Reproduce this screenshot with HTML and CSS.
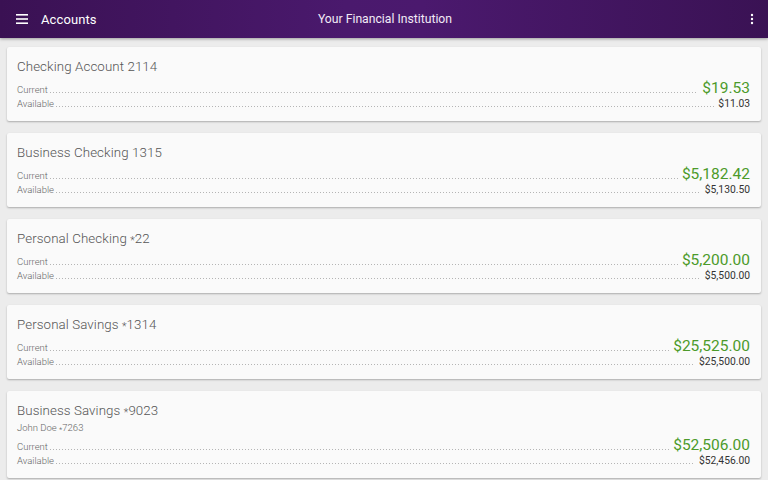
FILE: index.html
```html
<!DOCTYPE html>
<html>
<head>
<meta charset="utf-8">
<link rel="stylesheet" href="styles.css">
</head>
<body>
<header class="appbar">
  <div class="appbar-left">
    <svg class="icon-menu" width="12" height="10" viewBox="0 0 12 10"><rect x="0" y="0" width="12" height="1.6" fill="#fff"/><rect x="0" y="4.2" width="12" height="1.6" fill="#fff"/><rect x="0" y="8.4" width="12" height="1.6" fill="#fff"/></svg>
    <span class="appbar-title">Accounts</span>
  </div>
  <div class="appbar-center">Your Financial Institution</div>
  <svg class="icon-more" width="4" height="12" viewBox="0 0 4 12"><circle cx="2" cy="2" r="1.2" fill="#fff"/><circle cx="2" cy="6" r="1.2" fill="#fff"/><circle cx="2" cy="10" r="1.2" fill="#fff"/></svg>
</header>
<main class="list">
  <section class="card">
    <div class="card-title">Checking Account 2114</div>
    <div class="row row-current"><span class="label">Current</span><span class="leader"></span><span class="amount-big">$19.53</span></div>
    <div class="row row-avail"><span class="label">Available</span><span class="leader"></span><span class="amount-small">$11.03</span></div>
  </section>
  <section class="card">
    <div class="card-title">Business Checking 1315</div>
    <div class="row row-current"><span class="label">Current</span><span class="leader"></span><span class="amount-big">$5,182.42</span></div>
    <div class="row row-avail"><span class="label">Available</span><span class="leader"></span><span class="amount-small">$5,130.50</span></div>
  </section>
  <section class="card">
    <div class="card-title">Personal Checking <span class="ast">*</span>22</div>
    <div class="row row-current"><span class="label">Current</span><span class="leader"></span><span class="amount-big">$5,200.00</span></div>
    <div class="row row-avail"><span class="label">Available</span><span class="leader"></span><span class="amount-small">$5,500.00</span></div>
  </section>
  <section class="card">
    <div class="card-title">Personal Savings <span class="ast">*</span>1314</div>
    <div class="row row-current"><span class="label">Current</span><span class="leader"></span><span class="amount-big">$25,525.00</span></div>
    <div class="row row-avail"><span class="label">Available</span><span class="leader"></span><span class="amount-small">$25,500.00</span></div>
  </section>
  <section class="card">
    <div class="card-title">Business Savings <span class="ast">*</span>9023</div>
    <div class="card-sub">John Doe <span class="ast">*</span>7263</div>
    <div class="row row-current"><span class="label">Current</span><span class="leader"></span><span class="amount-big">$52,506.00</span></div>
    <div class="row row-avail"><span class="label">Available</span><span class="leader"></span><span class="amount-small">$52,456.00</span></div>
  </section>
</main>
</body>
</html>
```
FILE: styles.css
```css
html, body {
  margin: 0;
  padding: 0;
}
body {
  width: 768px;
  height: 480px;
  overflow: hidden;
  background: #ececec;
  font-family: Roboto, "Liberation Sans", sans-serif;
}
.appbar {
  position: relative;
  height: 38px;
  display: flex;
  align-items: center;
  background: linear-gradient(90deg, #3a1153 0%, #4a196d 45%, #4b196e 55%, #3a1254 100%);
  box-shadow: 0 1px 3px rgba(0,0,0,0.35);
  color: #fff;
  z-index: 2;
}
.appbar-left {
  display: flex;
  align-items: center;
  padding-left: 16px;
}
.icon-menu {
  display: block;
}
.appbar-title {
  margin-left: 13px;
  font-size: 13px;
  font-weight: 400;
  letter-spacing: 0.1px;
}
.appbar-center {
  position: absolute;
  left: 2px;
  right: 0;
  text-align: center;
  font-size: 12.2px;
  color: #f2eaf6;
  pointer-events: none;
}
.icon-more {
  display: block;
  margin-left: auto;
  margin-right: 14px;
}
.list {
  padding: 9px 7px 0 7px;
  display: flex;
  flex-direction: column;
  gap: 12px;
}
.card {
  background: #fafafa;
  border-radius: 2px;
  box-shadow: 0 1px 2px rgba(0,0,0,0.28);
  padding: 10px 11px 10px 10px;
}
.card-title {
  font-size: 13.3px;
  height: 20px;
  line-height: 20px;
  color: #555;
  font-weight: 300;
  letter-spacing: 0.1px;
}
.ast {
  font-size: 0.8em;
  vertical-align: -0.12em;
}
.card-sub {
  font-size: 9.5px;
  height: 13px;
  line-height: 13px;
  color: #666;
  font-weight: 300;
}
.row {
  display: flex;
  align-items: baseline;
}
.row-current {
  margin-top: 2px;
  height: 18px;
  line-height: 18px;
}
.row-avail {
  height: 14px;
  line-height: 14px;
}
.label {
  font-size: 9.5px;
  color: #666;
  font-weight: 300;
}
.leader {
  flex: 1;
  height: 1px;
  margin: 0 4px 0 2px;
  background-image: linear-gradient(to right, #b5b5b5 1px, transparent 1px);
  background-size: 3px 1px;
  background-repeat: repeat-x;
}
.amount-big {
  font-size: 15.5px;
  color: #4c9a2a;
}
.amount-small {
  font-size: 10.3px;
  color: #333;
}
```
